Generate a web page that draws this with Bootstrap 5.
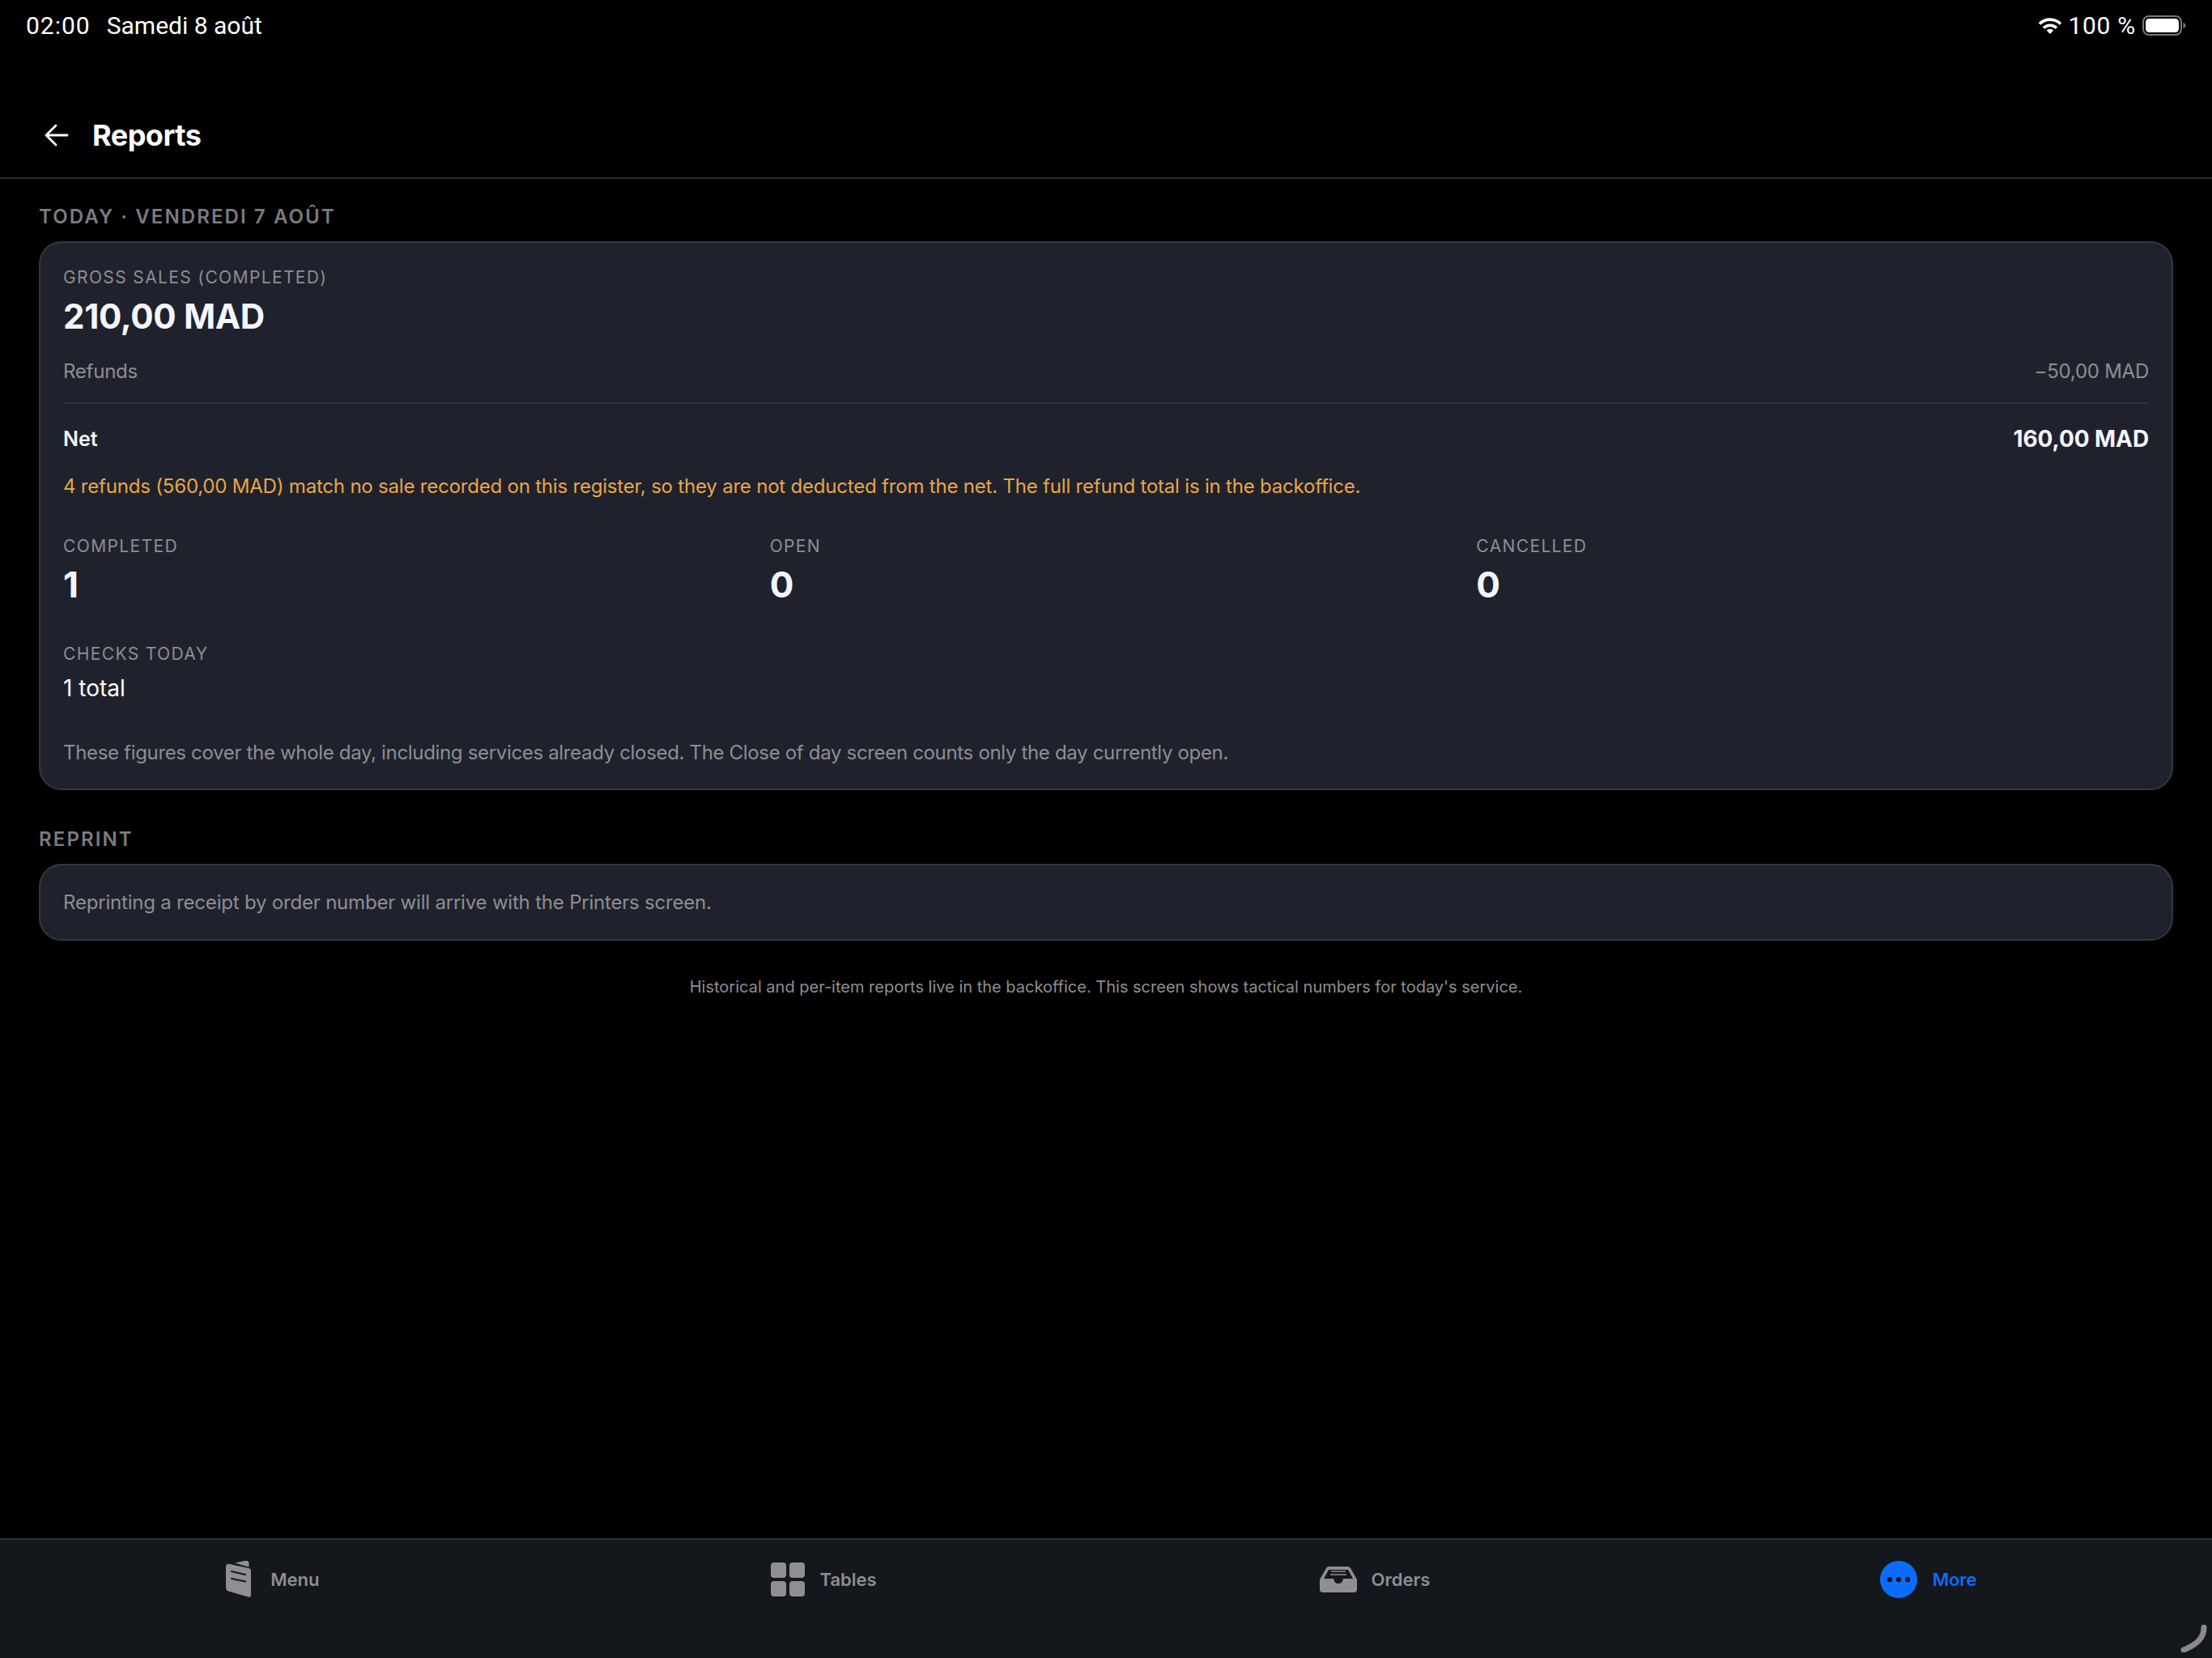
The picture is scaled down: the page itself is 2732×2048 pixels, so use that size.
<!doctype html>
<html lang="en">
<head>
<meta charset="utf-8">
<title>Reports</title>
<link href="https://cdn.jsdelivr.net/npm/bootstrap@5.3.0/dist/css/bootstrap.min.css" rel="stylesheet">
<style>
html,body{height:100%;background:#000}
body{font-family:Inter,"Liberation Sans",sans-serif;color:#fff;min-height:2048px;height:2048px;display:flex;flex-direction:column;overflow:hidden;position:relative}
.status{height:64px;padding:0 30px 0 32px;font-size:30px;font-family:Roboto,Inter,sans-serif;line-height:64px}
.status .time{letter-spacing:1px}
.status .date{margin-left:20px}
.status .pct{letter-spacing:.7px}
.status svg{display:block}
.topbar{height:157px;border-bottom:2px solid #2a2b2e;padding:76px 0 0 55px;gap:29px;align-items:flex-start}
.topbar h1{font-size:36px;font-weight:700;margin:0;line-height:54px;letter-spacing:-.5px}
.topbar svg{margin-top:13px}
main{padding:0 48px;flex:1 1 auto}
.sec{font-size:24px;font-weight:600;color:#7b7b7f;letter-spacing:2.1px;line-height:30px;margin:0;text-transform:uppercase}
.sec.first{padding-top:32px;margin-bottom:15px}
.sec.second{margin-top:46px;margin-bottom:15px}
.panel{background:#1f222c;border:2px solid #34373f;border-radius:28px;color:#fff}
.panel .card-body{padding:29px 28px 27px}
.lab{font-size:21px;letter-spacing:1.37px;color:#8e8e93;line-height:28px;text-transform:uppercase}
.big{font-size:42px;font-weight:700;line-height:52px;margin-top:8px;letter-spacing:-.3px;color:#f4f6ff}
.muted{font-size:24px;letter-spacing:-.2px;color:#8e8e93;line-height:34px}
.rowline{border-bottom:2px solid #2f323b;padding-bottom:21px;margin-top:25px;letter-spacing:-.25px}
.net{font-size:25px;font-weight:600;line-height:34px;margin-top:26px;color:#f4f6ff;align-items:center}
.net .amt{font-size:28px;font-weight:700;letter-spacing:-.1px}
.warn{font-size:24px;letter-spacing:-.2px;color:#e8a648;line-height:34px;margin-top:25px}
.stats{display:grid;grid-template-columns:repeat(3,1fr);column-gap:42px;margin-top:43px}
.num{font-size:44px;font-weight:700;line-height:54px;margin-top:6px;color:#f4f6ff}
.checks{margin-top:45px}
.total{font-size:28px;line-height:36px;margin-top:10px}
.note{margin-top:45px;letter-spacing:-.33px}
.panel.small-p .card-body{padding:29px 28px 28px}
.foot{font-size:20px;color:#8e8e93;line-height:30px;margin:42px 0 0;text-align:center}
.tabs{height:148px;background:#14171c;border-top:2px solid #2f3033;padding-right:4px;padding-top:26px;align-items:flex-start}
.tab{flex:1 1 0;display:flex;align-items:center;justify-content:center;gap:19px;height:46px;font-size:22px;font-weight:600;color:#8e8e93;text-decoration:none;padding-right:10px}
.tab.on{color:#0a6cff}
.tab.first{gap:22px;padding-right:8px}
.tab.second{padding-right:8px}
.tab.third{padding-right:11px;gap:18px}
.grab{position:absolute;right:6px;bottom:7px}
</style>
</head>
<body>
<div class="status d-flex justify-content-between align-items-center">
  <div><span class="time">02:00</span><span class="date">Samedi 8 août</span></div>
  <div class="d-flex align-items-center">
    <svg width="30" height="22" viewBox="0 0 30 22" class="me-2" fill="none" stroke="#fff" stroke-width="3.6"><path d="M2 8.5a18.5 18.5 0 0 1 26 0"/><path d="M7 13.5a11.3 11.3 0 0 1 16 0"/><path d="M15 21l-4.3-4.4a6 6 0 0 1 8.6 0z" fill="#fff" stroke="none"/></svg>
    <span class="pct">100 %</span>
    <svg width="56" height="26" viewBox="0 0 56 26" class="ms-2"><rect x="1" y="1" width="47" height="23" rx="7" fill="none" stroke="#777" stroke-width="2"/><rect x="4" y="4" width="41" height="17" rx="4.5" fill="#fff"/><path d="M50.500 9c2 .6 3 2 3 3.500s-1 2.900-3 3.500z" fill="#777"/></svg>
  </div>
</div>
<header class="topbar d-flex">
  <svg width="30" height="28" viewBox="0 0 30 28" fill="none" stroke="#fff" stroke-width="2.800" stroke-linecap="round" stroke-linejoin="round"><path d="M28 14H2M14 2 2 14l12 12"/></svg>
  <h1>Reports</h1>
</header>
<main>
  <h2 class="sec first">Today · vendredi 7 août</h2>
  <div class="card panel">
    <div class="card-body">
      <div class="lab">Gross sales (completed)</div>
      <div class="big">210,00 MAD</div>
      <div class="rowline d-flex justify-content-between muted"><span>Refunds</span><span>−50,00 MAD</span></div>
      <div class="net d-flex justify-content-between"><span>Net</span><span class="amt">160,00 MAD</span></div>
      <div class="warn">4 refunds (560,00 MAD) match no sale recorded on this register, so they are not deducted from the net. The full refund total is in the backoffice.</div>
      <div class="stats">
        <div><div class="lab">Completed</div><div class="num">1</div></div>
        <div><div class="lab">Open</div><div class="num">0</div></div>
        <div><div class="lab">Cancelled</div><div class="num">0</div></div>
      </div>
      <div class="checks"><div class="lab">Checks today</div><div class="total">1 total</div></div>
      <div class="muted note">These figures cover the whole day, including services already closed. The Close of day screen counts only the day currently open.</div>
    </div>
  </div>
  <h2 class="sec second">Reprint</h2>
  <div class="card panel small-p">
    <div class="card-body muted">Reprinting a receipt by order number will arrive with the Printers screen.</div>
  </div>
  <p class="foot">Historical and per-item reports live in the backoffice. This screen shows tactical numbers for today's service.</p>
</main>
<nav class="tabs d-flex">
  <a class="tab first" href="#">
    <svg width="34" height="46" viewBox="13 13 34 46"><path d="M25 15.500l13.500-2.700q4-.6 4 4v4z" fill="#8e8e93"/><path d="M14 21q0-5 4.500-4L42 22q3 .8 3 4v29q0 3.500-3.500 2.500L17 50.500q-3-1-3-4.500z" fill="#8e8e93"/><path d="M21 26l17 4M21 35l17 3.500" stroke="#14171c" stroke-width="2.200" stroke-linecap="round"/></svg>
    <span>Menu</span>
  </a>
  <a class="tab second" href="#">
    <svg width="42" height="42" viewBox="0 0 42 42" fill="#8e8e93"><rect width="19" height="19" rx="4"/><rect x="23" width="19" height="19" rx="4"/><rect y="23" width="19" height="19" rx="4"/><rect x="23" y="23" width="19" height="19" rx="4"/></svg>
    <span>Tables</span>
  </a>
  <a class="tab third" href="#">
    <svg width="46" height="32" viewBox="12 14 46 32"><path d="M12 30 20 16q1-2 4-2h22q3 0 4 2l8 14v12q0 4-4 4H16q-4 0-4-4z" fill="#8e8e93"/><path d="M17 29l6-11h24l6 11H41q-1 6-6 6t-6-6z" fill="#14171c"/><path d="M26 20h18M25 24h20" stroke="#8e8e93" stroke-width="1.600"/></svg>
    <span>Orders</span>
  </a>
  <a class="tab on" href="#">
    <svg width="46" height="46" viewBox="0 0 46 46"><circle cx="23" cy="23" r="23" fill="#0a6cff"/><circle cx="12" cy="23" r="3.200" fill="#14171c"/><circle cx="23" cy="23" r="3.200" fill="#14171c"/><circle cx="34" cy="23" r="3.200" fill="#14171c"/></svg>
    <span>More</span>
  </a>
</nav>
<svg class="grab" width="34" height="34" viewBox="0 0 34 34" fill="none" stroke="#8a8a8e" stroke-width="7" stroke-linecap="round"><path d="M30 3c0 12-6 20-25 28"/></svg>
</body>
</html>
